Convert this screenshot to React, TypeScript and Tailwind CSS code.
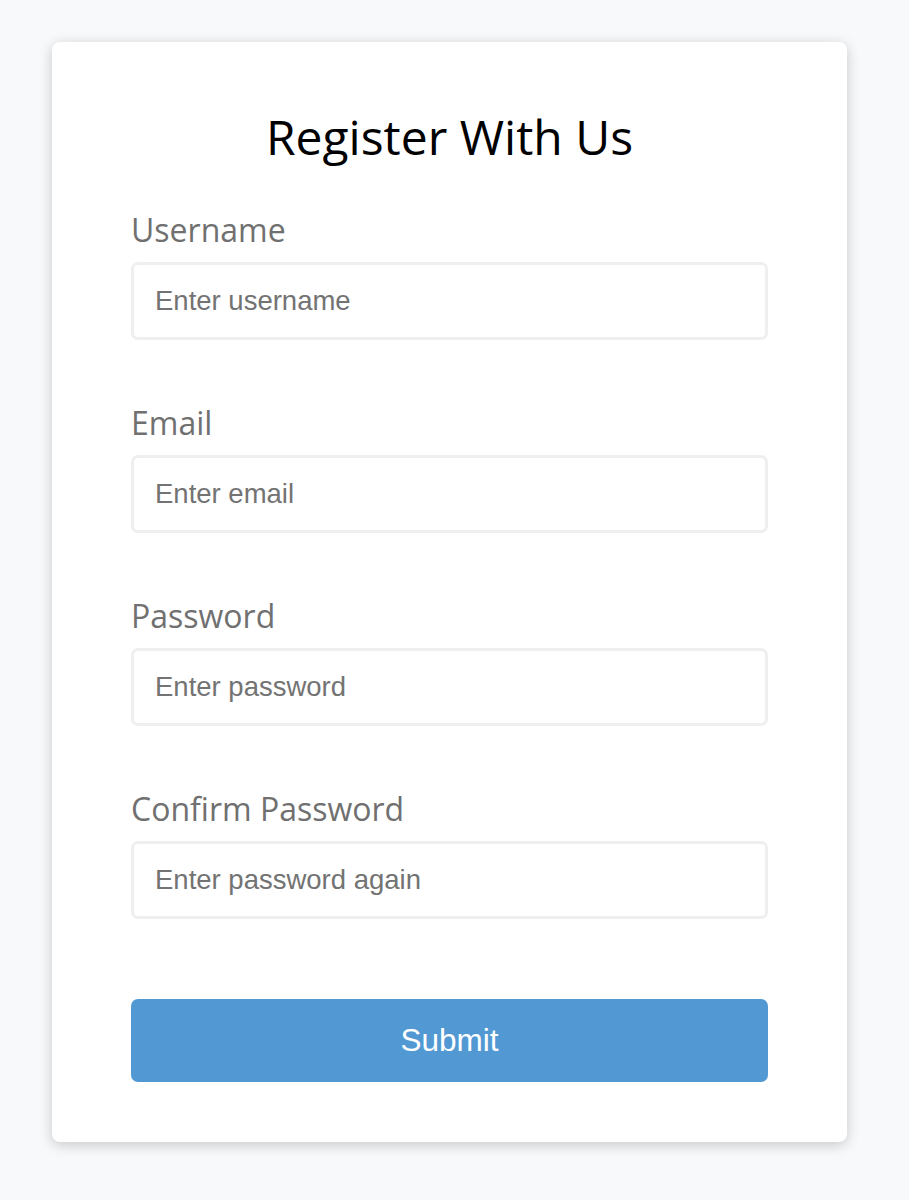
import React from "react";

const fields = [
  { label: "Username", placeholder: "Enter username", type: "text" },
  { label: "Email", placeholder: "Enter email", type: "email" },
  { label: "Password", placeholder: "Enter password", type: "password" },
  { label: "Confirm Password", placeholder: "Enter password again", type: "password" },
];

export default function App() {
  return (
    <div className="min-h-[1200px] bg-[#f8f9fb] pt-[42px]">
      <div
        className="ml-[52px] w-[795px] h-[1100px] bg-white rounded-[8px] shadow-[0_3px_14px_rgba(0,0,0,0.2)] px-[79px] pt-[68px]"
        style={{ fontFamily: '"Open Sans", sans-serif' }}
      >
        <h1 className="text-center text-[48px] leading-[58px] text-black -mt-[2px]">Register With Us</h1>
        <form className="flex flex-col mt-[40px]" onSubmit={(e) => e.preventDefault()}>
          {fields.map((f, i) => (
            <div key={f.label} className={i > 0 ? "mt-[59px] flex flex-col" : "flex flex-col"}>
              <label className="text-[32px] leading-[48px] text-[#707070]">{f.label}</label>
              <input
                type={f.type === "password" ? "text" : f.type}
                placeholder={f.placeholder}
                className="mt-[8px] h-[78px] w-full border-[3px] border-[#efefef] rounded-[7px] px-[21px] text-[27.5px] text-[#333] placeholder:text-[#737373] outline-none"
                style={{ fontFamily: '"Liberation Sans", Arial, sans-serif' }}
              />
            </div>
          ))}
          <button
            type="submit"
            className="mt-[80px] h-[83px] w-full rounded-[7px] bg-[#5299d4] text-white text-[31.5px]"
            style={{ fontFamily: '"Liberation Sans", Arial, sans-serif' }}
          >
            Submit
          </button>
        </form>
      </div>
    </div>
  );
}
